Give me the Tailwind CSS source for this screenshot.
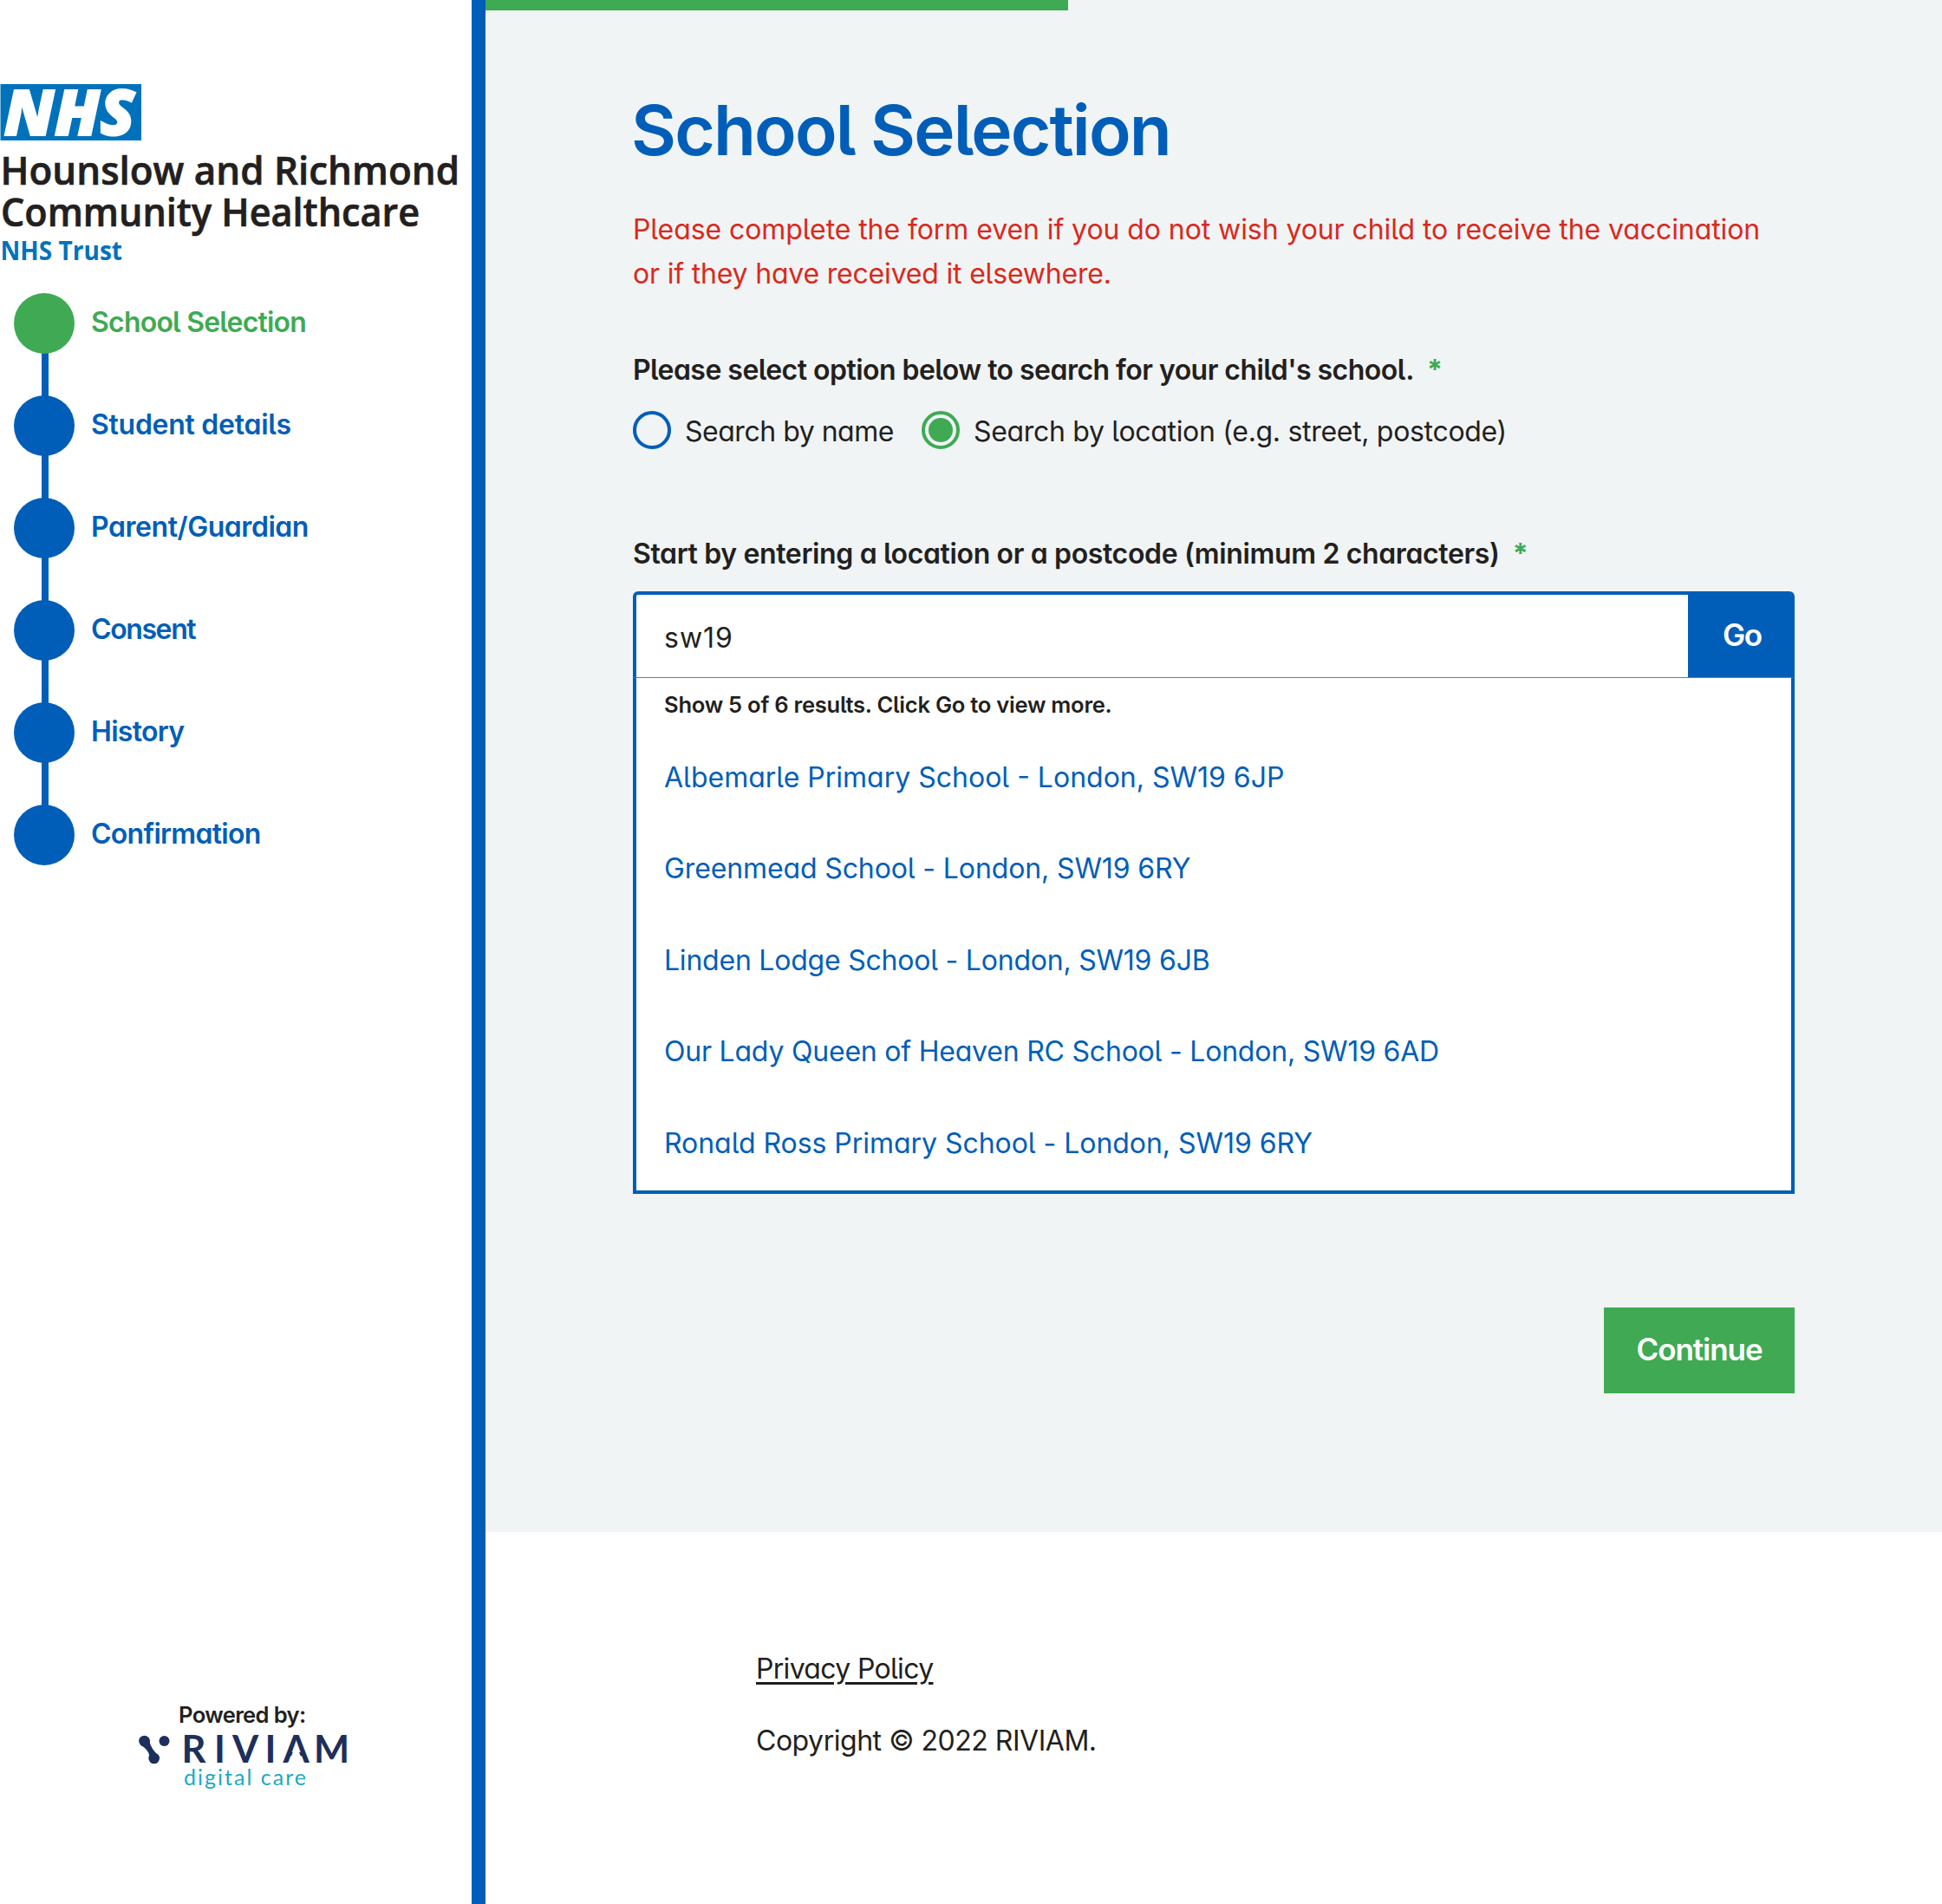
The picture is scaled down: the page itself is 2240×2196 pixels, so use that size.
<!DOCTYPE html>
<html lang="en">
<head>
<meta charset="utf-8">
<title>School Selection</title>
<script src="https://cdn.jsdelivr.net/npm/@tailwindcss/browser@4"></script>
</head>
<body class="bg-white">
<div class="flex h-[2196px] w-[2240px] overflow-hidden font-['Inter',sans-serif] text-[32px] leading-[51px] text-[#231f20] [font-feature-settings:'cv11','cv05']">

  <!-- Sidebar -->
  <aside class="flex w-[560px] shrink-0 flex-col border-r-[16px] border-[#005eb8] bg-white">
    <svg class="mt-[90px] block shrink-0" width="544" height="210" viewBox="0 0 544 210">
      <rect x="0.5" y="7" width="162.5" height="65" fill="#0072bc"/>
      <g font-family="'Open Sans',sans-serif">
        <text x="4.500" y="65.500" font-size="73" font-weight="800" font-style="italic" fill="#fff" stroke="#fff" stroke-width="1.800" textLength="151" lengthAdjust="spacingAndGlyphs">NHS</text>
        <g font-weight="600" fill="#231f20" stroke="#231f20" stroke-width="0.700" font-size="46">
          <text x="0.500" y="123" textLength="529.500" lengthAdjust="spacingAndGlyphs">Hounslow and Richmond</text>
          <text x="1" y="171" textLength="483" lengthAdjust="spacingAndGlyphs">Community Healthcare</text>
        </g>
        <text x="0.500" y="210" font-size="30.500" font-weight="700" fill="#0072bc" textLength="140.500" lengthAdjust="spacingAndGlyphs">NHS Trust</text>
      </g>
    </svg>

    <nav class="relative mt-[38px] ml-4 flex flex-col gap-12 font-semibold text-[#005eb8]">
      <div class="absolute top-[35px] bottom-[35px] left-8 w-2 bg-[#005eb8]"></div>
      <div class="relative flex h-[70px] items-center gap-[19px] text-[#3faa53]"><span class="size-[70px] rounded-full bg-[#3faa53]"></span><span class="-mt-1 tracking-[-0.78px]">School Selection</span></div>
      <div class="relative flex h-[70px] items-center gap-[19px]"><span class="size-[70px] rounded-full bg-[#005eb8]"></span><span class="-mt-1 tracking-[-0.27px]">Student details</span></div>
      <div class="relative flex h-[70px] items-center gap-[19px]"><span class="size-[70px] rounded-full bg-[#005eb8]"></span><span class="-mt-1 tracking-[-0.45px]">Parent/Guardian</span></div>
      <div class="relative flex h-[70px] items-center gap-[19px]"><span class="size-[70px] rounded-full bg-[#005eb8]"></span><span class="-mt-1 tracking-[-1.4px]">Consent</span></div>
      <div class="relative flex h-[70px] items-center gap-[19px]"><span class="size-[70px] rounded-full bg-[#005eb8]"></span><span class="-mt-1 tracking-[-0.7px]">History</span></div>
      <div class="relative flex h-[70px] items-center gap-[19px]"><span class="size-[70px] rounded-full bg-[#005eb8]"></span><span class="-mt-1 tracking-[-0.72px]">Confirmation</span></div>
    </nav>

    <div class="mt-auto flex flex-col pb-[126px]">
      <p class="pl-[206px] text-[25.6px] leading-10 font-semibold tracking-[-0.65px]">Powered by:</p>
      <svg class="ml-[150px] block" width="260" height="72" viewBox="0 0 260 72">
        <g fill="#1d2f5b">
          <circle cx="16.500" cy="10" r="6.300"/><circle cx="39.500" cy="10" r="6"/><circle cx="27.700" cy="30" r="6.300"/>
          <path d="M22.500 8 C22 15 28 22 33.500 28 L22 32 C24 24 18 18 12 14.500 Z"/>
        </g>
        <text x="59.500 97 118 155.500 176.500 212" y="35" font-family="Lato,sans-serif" font-weight="700" font-size="43.500" fill="#1d2f5b">RIVIAM</text>
        <path d="M183 36 L191.400 13 L199.800 36 Z" fill="#fff"/>
        <text x="62" y="61" font-family="Lato,sans-serif" font-size="25" fill="#1ba9c4" textLength="141" lengthAdjust="spacing">digital care</text>
      </svg>
    </div>
  </aside>

  <!-- Page -->
  <div class="flex flex-1 flex-col">
    <main class="h-[1767px] bg-[#f0f4f5]">
      <div class="h-3 w-2/5 bg-[#3faa53]"></div>
      <div class="px-[170px] pt-[88px]">
        <h1 class="-ml-[2px] text-[80px] leading-[100px] font-semibold tracking-[-1.85px] whitespace-nowrap text-[#005eb8]">School Selection</h1>
        <p class="mt-[39px] whitespace-nowrap text-[#da291c]"><span class="tracking-[-0.08px]">Please complete the form even if you do not wish your child to receive the vaccination</span><br><span class="tracking-[-0.19px]">or if they have received it elsewhere.</span></p>

        <div class="mt-[60px] flex gap-[15px] font-semibold whitespace-nowrap"><span class="tracking-[-0.53px]">Please select option below to search for your child's school.</span><span class="font-bold text-[#3faa53]">*</span></div>
        <div class="mt-[22px] flex h-11 items-start leading-[47px] whitespace-nowrap">
          <span class="size-11 rounded-full border-4 border-[#005eb8]"></span>
          <span class="ml-4 w-[273px] tracking-[-0.48px]">Search by name</span>
          <span class="flex size-11 items-center justify-center rounded-full border-4 border-[#3faa53]"><span class="size-7 rounded-full bg-[#3faa53]"></span></span>
          <span class="ml-4 tracking-[-0.31px]">Search by location (e.g. street, postcode)</span>
        </div>

        <div class="mt-[95px] flex gap-[15px] font-semibold whitespace-nowrap"><span class="tracking-[-0.36px]">Start by entering a location or a postcode (minimum 2 characters)</span><span class="font-bold text-[#3faa53]">*</span></div>

        <div class="mt-[18px] flex h-[99px] overflow-hidden rounded-t-[6px] border-4 border-b-0 border-[#005eb8] bg-white">
          <div class="flex-1 pl-8 leading-[99px] tracking-[1px]">sw19</div>
          <div class="-mt-1 -mr-1 w-[123px] bg-[#005eb8] pl-10 text-[35px] leading-[101px] font-semibold tracking-[-1.4px] text-white">Go</div>
        </div>
        <div class="h-[596px] border-4 border-t border-[#005eb8] border-t-[#4a80c4] bg-white pl-8 whitespace-nowrap text-[#005eb8]">
          <p class="pt-[11px] text-[25.6px] leading-10 font-semibold tracking-[-0.27px] text-[#231f20]">Show 5 of 6 results. Click Go to view more.</p>
          <ul class="mt-[10.6px] leading-[105.5px]">
            <li>Albemarle Primary School - London, SW19 6JP</li>
            <li class="tracking-[-0.12px]">Greenmead School - London, SW19 6RY</li>
            <li class="tracking-[-0.22px]">Linden Lodge School - London, SW19 6JB</li>
            <li class="tracking-[-0.21px]">Our Lady Queen of Heaven RC School - London, SW19 6AD</li>
            <li class="tracking-[-0.04px]">Ronald Ross Primary School - London, SW19 6RY</li>
          </ul>
        </div>

        <div class="mt-[131px] flex justify-end">
          <button class="h-[99px] w-[220px] bg-[#3faa53] pb-0.5 text-[35px] leading-[97px] font-semibold tracking-[-1.05px] text-white">Continue</button>
        </div>
      </div>
    </main>
    <footer class="flex flex-col items-start gap-8 bg-white pt-[132px] pl-[312px] whitespace-nowrap">
      <a class="tracking-[-0.68px] underline decoration-[3px] underline-offset-[4px]">Privacy Policy</a>
      <p class="tracking-[-0.47px]">Copyright © 2022 RIVIAM.</p>
    </footer>
  </div>
</div>
</body>
</html>
